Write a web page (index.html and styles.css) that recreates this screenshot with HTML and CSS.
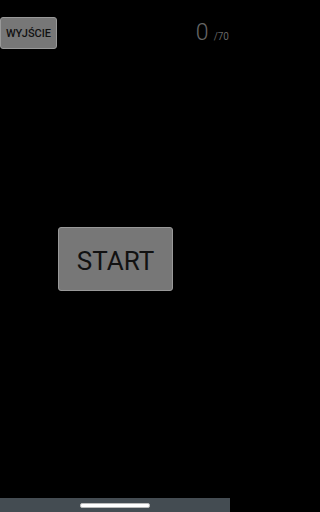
FILE: index.html
```html
<!DOCTYPE html>
<html>
<head>
<meta charset="utf-8">
<link rel="stylesheet" href="styles.css">
</head>
<body>
<div class="screen">
  <div class="top">
    <div class="exit">WYJŚCIE</div>
    <div class="score"><span class="num">0</span><span class="total">/70</span></div>
  </div>
  <div class="middle">
    <div class="start">START</div>
  </div>
  <div class="navbar"><div class="handle"></div></div>
</div>
</body>
</html>
```
FILE: styles.css
```css
html, body {
  margin: 0;
  padding: 0;
  background: #000;
  overflow: hidden;
}
.screen {
  width: 230px;
  height: 512px;
  display: flex;
  flex-direction: column;
  font-family: Roboto, "Liberation Sans", sans-serif;
  overflow: hidden;
}
.top {
  display: flex;
  justify-content: space-between;
  align-items: flex-start;
  padding-top: 17px;
  height: 32px;
}
.exit {
  width: 57px;
  height: 32px;
  box-sizing: border-box;
  background: #777;
  border: 1px solid #999;
  border-radius: 3px;
  color: #111;
  font-size: 11px;
  font-weight: 500;
  display: flex;
  align-items: center;
  justify-content: center;
  padding-top: 1px;
}
.score {
  display: flex;
  align-items: baseline;
  white-space: nowrap;
  margin-right: 1px;
  margin-top: 2px;
  color: #666;
}
.num {
  font-size: 23px;
  font-weight: 300;
  margin-right: 5px;
}
.total {
  font-size: 10px;
}
.middle {
  flex: 1;
  display: flex;
  justify-content: center;
  align-items: flex-start;
  padding-top: 178px;
}
.start {
  width: 115px;
  height: 64px;
  box-sizing: border-box;
  margin-left: 1px;
  background: #777;
  border: 1px solid #999;
  border-radius: 3px;
  color: #111;
  font-size: 26px;
  display: flex;
  align-items: center;
  justify-content: center;
  padding-top: 3px;
}
.navbar {
  height: 14px;
  background: #444c52;
  display: flex;
  justify-content: center;
  align-items: flex-start;
}
.handle {
  margin-top: 5px;
  width: 68px;
  height: 3px;
  background: #fff;
  border: 1px solid #bbb;
  border-radius: 2px;
  box-sizing: content-box;
}
```
